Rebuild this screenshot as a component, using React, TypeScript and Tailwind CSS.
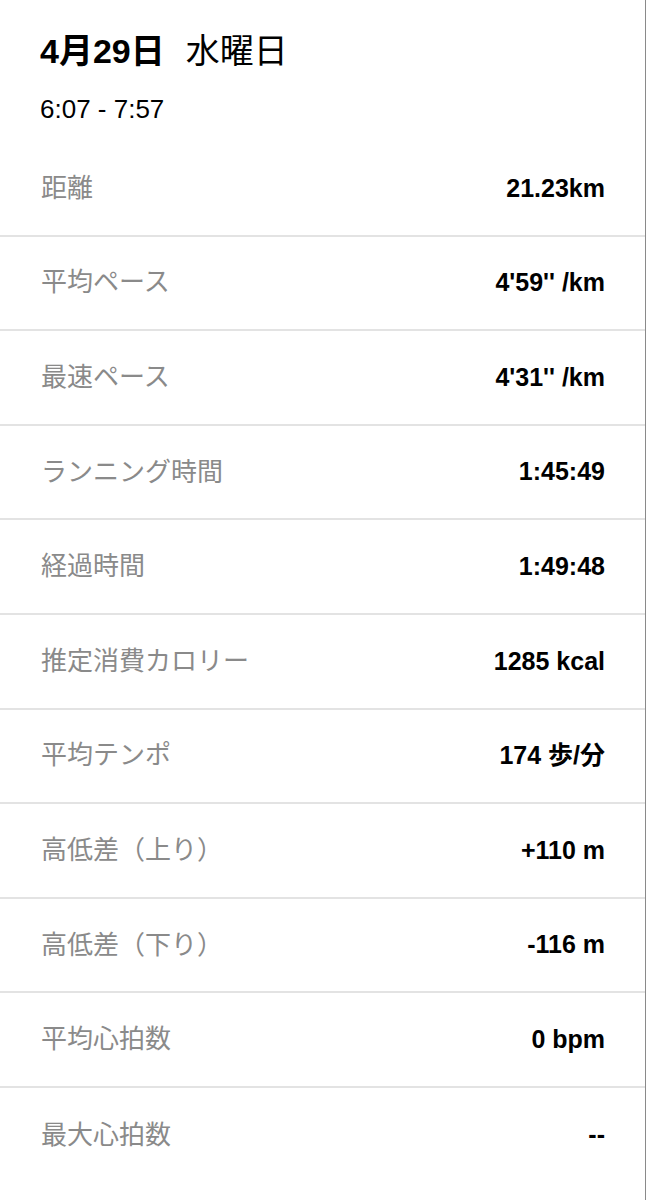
import React from "react";

const rows: [string, string][] = [
  ["距離", "21.23km"],
  ["平均ペース", "4'59'' /km"],
  ["最速ペース", "4'31'' /km"],
  ["ランニング時間", "1:45:49"],
  ["経過時間", "1:49:48"],
  ["推定消費カロリー", "1285 kcal"],
  ["平均テンポ", "174 歩/分"],
  ["高低差（上り）", "+110 m"],
  ["高低差（下り）", "-116 m"],
  ["平均心拍数", "0 bpm"],
  ["最大心拍数", "--"],
];

export default function App() {
  return (
    <div
      className="w-[647px] h-[1200px] bg-white overflow-hidden"
      style={{ fontFamily: '"Liberation Sans", "Noto Sans CJK JP", sans-serif' }}
    >
      <div className="w-[646px] h-[1200px] border-r-[1.5px] border-[#8a8a8a]">
        <div className="pl-[40px] pt-[28px] h-[142px]">
          <div className="text-[34px] leading-[46px] text-black">
            <span className="font-bold">4月29日</span>
            <span className="ml-[21px] font-normal">水曜日</span>
          </div>
          <div className="mt-[20px] text-[26px] leading-[30px] text-black">6:07 - 7:57</div>
        </div>
        <div>
          {rows.map(([label, value]) => (
            <div
              key={label}
              className="h-[94.6px] flex items-center justify-between pl-[41px] pr-[40px] border-b-2 border-[#e3e3e3] last:border-b-0"
            >
              <span className="text-[26px] text-[#8a8a8a]">{label}</span>
              <span className="text-[25px] font-bold text-black">{value}</span>
            </div>
          ))}
        </div>
      </div>
    </div>
  );
}
